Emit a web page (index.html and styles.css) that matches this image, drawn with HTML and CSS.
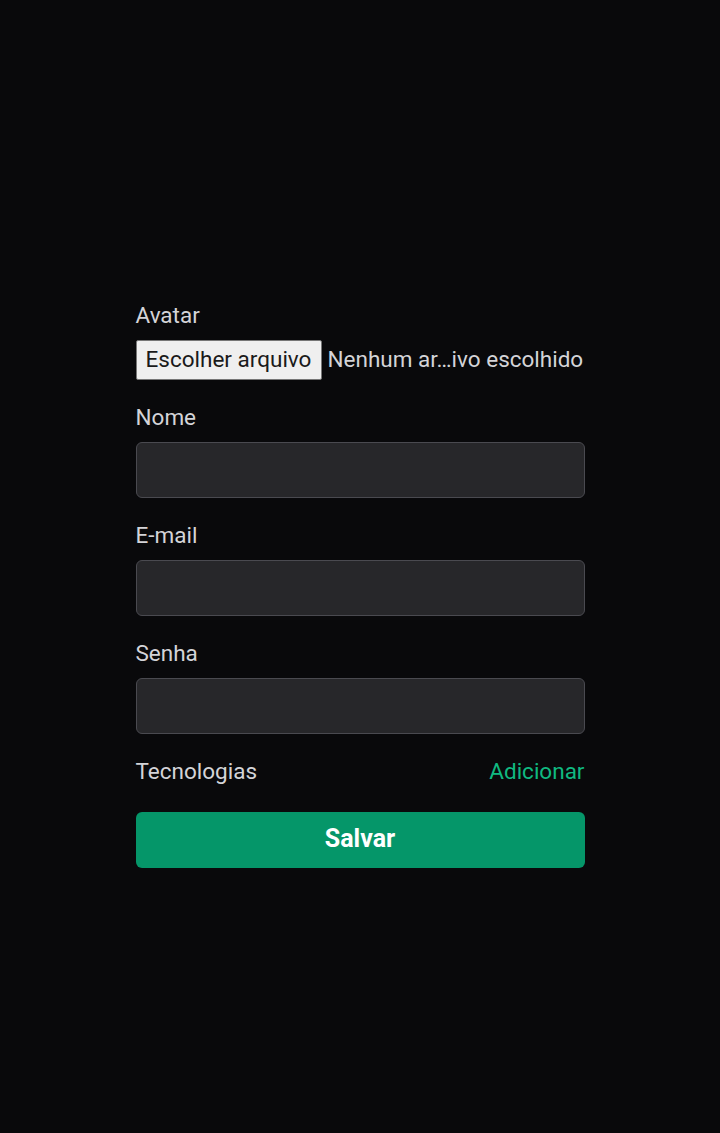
FILE: index.html
```html
<!DOCTYPE html>
<html lang="pt-BR">
<head>
<meta charset="utf-8">
<title>Cadastro</title>
<link rel="stylesheet" href="styles.css">
</head>
<body>
<main class="page">
  <form class="form">
    <label class="label">Avatar</label>
    <div class="file">
      <span class="file-btn">Escolher arquivo</span>
      <span class="file-name">Nenhum ar…ivo escolhido</span>
    </div>

    <label class="label">Nome</label>
    <div class="input"></div>

    <label class="label">E-mail</label>
    <div class="input"></div>

    <label class="label">Senha</label>
    <div class="input"></div>

    <div class="tech-row">
      <span class="label-inline">Tecnologias</span>
      <span class="add">Adicionar</span>
    </div>

    <button type="button" class="save">Salvar</button>
  </form>
</main>
</body>
</html>
```

FILE: styles.css
```css
html, body {
  margin: 0;
  padding: 0;
  background: #09090b;
  height: 100%;
}
body {
  font-family: Roboto, "Noto Sans", sans-serif;
  color: #d4d4d8;
}
.page {
  display: flex;
  justify-content: center;
  padding-top: 302px;
}
.form {
  width: 449px;
  display: flex;
  flex-direction: column;
}
.label {
  display: block;
  font-size: 22.5px;
  line-height: 26px;
  height: 28px;
  margin-bottom: 10px;
  color: #d4d4d8;
}
.file {
  display: flex;
  align-items: center;
  height: 40px;
  margin-bottom: 24px;
  white-space: nowrap;
}
.file-btn {
  box-sizing: border-box;
  height: 40px;
  width: 186px;
  display: flex;
  align-items: center;
  justify-content: center;
  padding-bottom: 2px;
  background: #efefef;
  border: 1px solid #767676;
  border-radius: 2px;
  color: #1a1a1a;
  font-size: 22.5px;
}
.file-name {
  margin-left: 6px;
  margin-bottom: 2px;
  font-size: 22.5px;
  color: #d4d4d8;
}
.input {
  box-sizing: border-box;
  height: 56px;
  background: #27272a;
  border: 1px solid #4a4a50;
  border-radius: 6px;
  margin-bottom: 24px;
}
.tech-row {
  display: flex;
  justify-content: space-between;
  align-items: center;
  height: 28px;
  padding-bottom: 2px;
  box-sizing: border-box;
  font-size: 22.5px;
  line-height: 26px;
  margin-bottom: 26px;
}
.label-inline {
  color: #d4d4d8;
}
.add {
  color: #10b981;
}
.save {
  height: 56px;
  border: none;
  border-radius: 6px;
  background: #059669;
  color: #ffffff;
  font-family: Roboto, "Noto Sans", sans-serif;
  font-weight: 700;
  font-size: 25px;
  padding: 0 0 3px;
}
```
